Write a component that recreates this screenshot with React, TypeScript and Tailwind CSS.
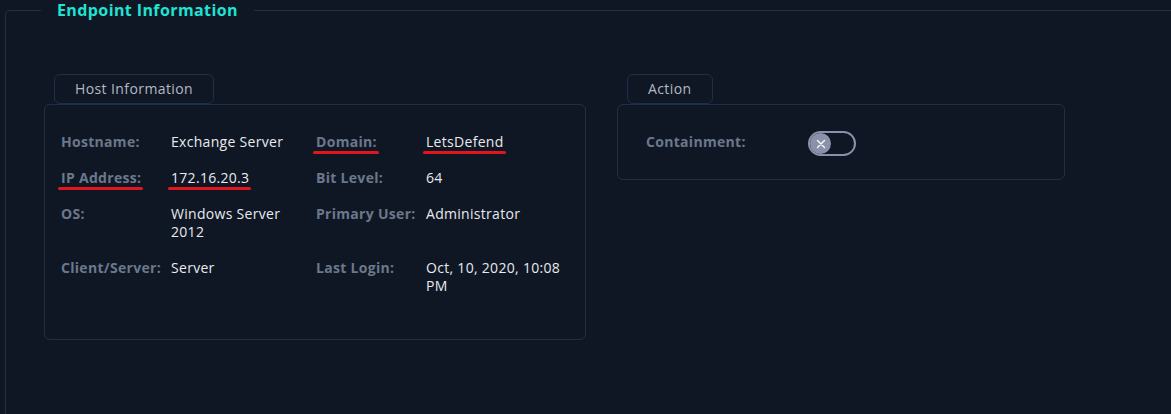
import React from "react";

const font = { fontFamily: '"Open Sans", "Liberation Sans", sans-serif' };

function Marked({ children }: { children: React.ReactNode }) {
  return (
    <span className="relative inline-block">
      {children}
      <span className="absolute -left-[3px] -right-[2px] -bottom-[3px] h-[3px] rounded-full bg-[#e3161d]" />
    </span>
  );
}

function Tab({ label }: { label: string }) {
  return (
    <div className="ml-[10px] self-start h-[30px] px-[20px] flex items-center rounded-md border border-[#1f2f48] text-[14px] text-[#b4b9c3] tracking-[0.4px]">
      {label}
    </div>
  );
}

const rows: [React.ReactNode, React.ReactNode, React.ReactNode, React.ReactNode][] = [
  ["Hostname:", "Exchange Server", <Marked>Domain:</Marked>, <Marked>LetsDefend</Marked>],
  [<Marked>IP Address:</Marked>, <Marked>172.16.20.3</Marked>, "Bit Level:", "64"],
  ["OS:", "Windows Server 2012", "Primary User:", "Administrator"],
  ["Client/Server:", "Server", "Last Login:", "Oct, 10, 2020, 10:08 PM"],
];

export default function App() {
  return (
    <div
      className="w-[1171px] h-[414px] overflow-hidden bg-[#0f1725] text-[14px] leading-[18px]"
      style={font}
    >
      <fieldset className="ml-[5px] w-[1200px] h-[440px] rounded border border-[#1f2f48]">
        <legend className="ml-[35px] px-[16px] text-[16px] leading-[20px] font-bold text-[#20e3d2] tracking-[0.4px]">
          Endpoint Information
        </legend>

        <div className="flex gap-[31px] pl-[38px] pt-[54px]">
          <div className="flex flex-col w-[542px]">
            <Tab label="Host Information" />
            <div className="rounded-md border border-[#1f2f48] pt-[28px] pb-[44px] pl-[16px] pr-[16px]">
              <div className="grid grid-cols-[110px_145px_110px_1fr] gap-y-[18px] tracking-[0.3px]">
                {rows.map((r, i) => (
                  <React.Fragment key={i}>
                    <div className="font-bold text-[#6c778c]">{r[0]}</div>
                    <div className="text-[#e8eaee]">{r[1]}</div>
                    <div className="font-bold text-[#6c778c]">{r[2]}</div>
                    <div className="text-[#e8eaee]">{r[3]}</div>
                  </React.Fragment>
                ))}
              </div>
            </div>
          </div>

          <div className="flex flex-col w-[448px]">
            <Tab label="Action" />
            <div className="h-[76px] rounded-md border border-[#1f2f48] pl-[28px] flex items-start pt-[28px]">
              <div className="w-[162px] font-bold text-[#6c778c] tracking-[0.3px]">Containment:</div>
              <div className="-mt-[2px] w-[48px] h-[25px] rounded-full border-2 border-[#8a90a9] flex items-center">
                <div className="w-[21px] h-[21px] rounded-full bg-[#8c91aa] flex items-center justify-center">
                  <svg width="10" height="10" viewBox="0 0 10 10">
                    <path d="M1.5 1.5L8.5 8.5M8.5 1.5L1.5 8.5" stroke="#fff" strokeWidth="1.3" strokeLinecap="round" />
                  </svg>
                </div>
              </div>
            </div>
          </div>
        </div>
      </fieldset>
    </div>
  );
}
